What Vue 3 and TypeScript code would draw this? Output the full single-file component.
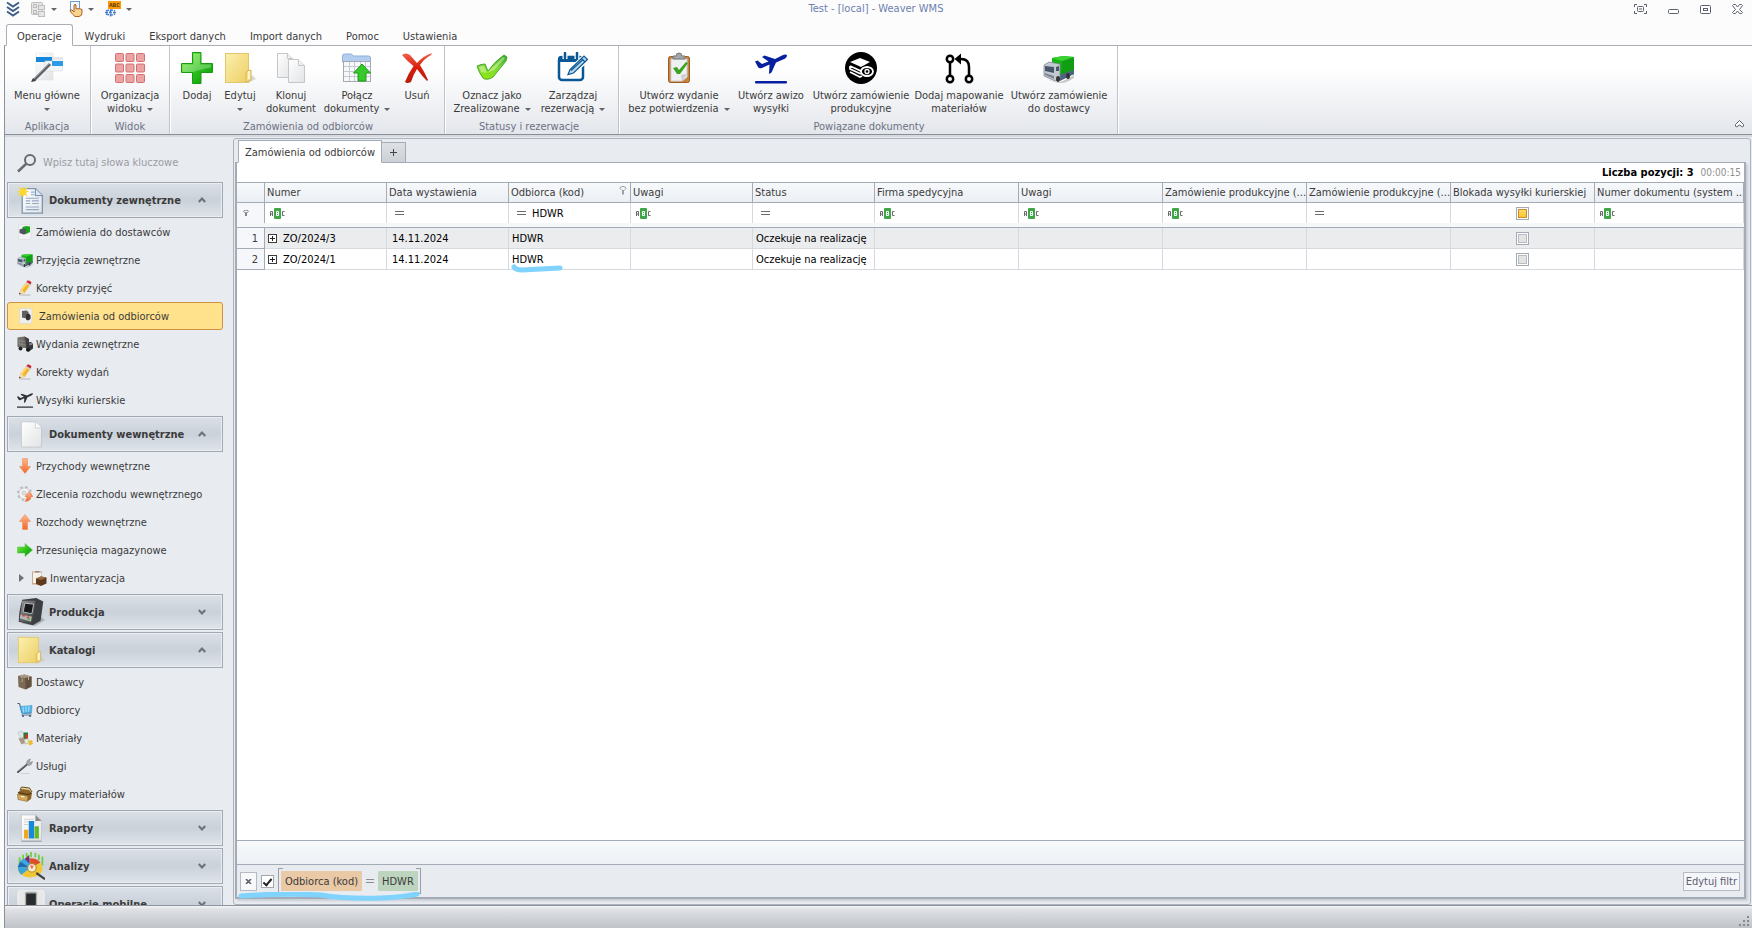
<script setup lang="ts">
import { ref } from 'vue'

interface RibbonButton { icon: string; lines: string[]; drop?: boolean; size: string }
interface RibbonGroup { title: string; key: string; buttons: RibbonButton[] }
interface NavItem { icon: string; label: string; nested?: boolean }
interface NavGroup { title: string; icon: string; open: boolean; items: NavItem[] }
interface Column { title: string; filter: 'abc' | 'eq' | 'check'; value?: string; funnel?: boolean; wide?: boolean }
interface Order { number: string; date: string; customer: string; status: string }

const tabs = ['Operacje', 'Wydruki', 'Eksport danych', 'Import danych', 'Pomoc', 'Ustawienia']
const activeTab = ref('Operacje')

const ribbon: RibbonGroup[] = [
  { title: 'Aplikacja', key: 'g-app', buttons: [{ icon: 'menu', lines: ['Menu główne', ''], drop: true, size: 'w82' }] },
  { title: 'Widok', key: 'g-view', buttons: [{ icon: 'layout', lines: ['Organizacja', 'widoku'], drop: true, size: 'w74' }] },
  {
    title: 'Zamówienia od odbiorców', key: 'g-orders', buttons: [
      { icon: 'plus', lines: ['Dodaj'], size: 'w42' },
      { icon: 'folder', lines: ['Edytuj', ''], drop: true, size: 'w44' },
      { icon: 'clone', lines: ['Klonuj', 'dokument'], size: 'w58' },
      { icon: 'merge', lines: ['Połącz', 'dokumenty'], drop: true, size: 'w74' },
      { icon: 'remove', lines: ['Usuń'], size: 'w46' },
    ],
  },
  {
    title: 'Statusy i rezerwacje', key: 'g-status', buttons: [
      { icon: 'check', lines: ['Oznacz jako', 'Zrealizowane'], drop: true, size: 'w88' },
      { icon: 'calendar', lines: ['Zarządzaj', 'rezerwacją'], drop: true, size: 'w74' },
    ],
  },
  {
    title: 'Powiązane dokumenty', key: 'g-linked', buttons: [
      { icon: 'clipboard', lines: ['Utwórz wydanie', 'bez potwierdzenia'], drop: true, size: 'w110' },
      { icon: 'plane', lines: ['Utwórz awizo', 'wysyłki'], size: 'w74' },
      { icon: 'production', lines: ['Utwórz zamówienie', 'produkcyjne'], size: 'w106' },
      { icon: 'branch', lines: ['Dodaj mapowanie', 'materiałów'], size: 'w90' },
      { icon: 'truck', lines: ['Utwórz zamówienie', 'do dostawcy'], size: 'w110' },
    ],
  },
]

const groups = ref<NavGroup[]>([
  {
    title: 'Dokumenty zewnętrzne', icon: 'docnew', open: true, items: [
      { icon: 'pagetruck', label: 'Zamówienia do dostawców' },
      { icon: 'truck', label: 'Przyjęcia zewnętrzne' },
      { icon: 'pencil', label: 'Korekty przyjęć' },
      { icon: 'pagetruckdark', label: 'Zamówienia od odbiorców' },
      { icon: 'truckdark', label: 'Wydania zewnętrzne' },
      { icon: 'pencil', label: 'Korekty wydań' },
      { icon: 'planedark', label: 'Wysyłki kurierskie' },
    ],
  },
  {
    title: 'Dokumenty wewnętrzne', icon: 'doc', open: true, items: [
      { icon: 'down', label: 'Przychody wewnętrzne' },
      { icon: 'gear', label: 'Zlecenia rozchodu wewnętrznego' },
      { icon: 'up', label: 'Rozchody wewnętrzne' },
      { icon: 'right', label: 'Przesunięcia magazynowe' },
      { icon: 'inventory', label: 'Inwentaryzacja', nested: true },
    ],
  },
  { title: 'Produkcja', icon: 'machine', open: false, items: [] },
  {
    title: 'Katalogi', icon: 'folder', open: true, items: [
      { icon: 'box', label: 'Dostawcy' },
      { icon: 'cart', label: 'Odbiorcy' },
      { icon: 'materials', label: 'Materiały' },
      { icon: 'wrench', label: 'Usługi' },
      { icon: 'bag', label: 'Grupy materiałów' },
    ],
  },
  { title: 'Raporty', icon: 'report', open: false, items: [] },
  { title: 'Analizy', icon: 'analysis', open: false, items: [] },
  { title: 'Operacje mobilne', icon: 'mobile', open: false, items: [] },
])
const activeItem = ref('Zamówienia od odbiorców')

const columns: Column[] = [
  { title: 'Numer', filter: 'abc' },
  { title: 'Data wystawienia', filter: 'eq' },
  { title: 'Odbiorca (kod)', filter: 'eq', value: 'HDWR', funnel: true },
  { title: 'Uwagi', filter: 'abc' },
  { title: 'Status', filter: 'eq' },
  { title: 'Firma spedycyjna', filter: 'abc', wide: true },
  { title: 'Uwagi', filter: 'abc', wide: true },
  { title: 'Zamówienie produkcyjne (...', filter: 'abc', wide: true },
  { title: 'Zamówienie produkcyjne (...', filter: 'eq', wide: true },
  { title: 'Blokada wysyłki kurierskiej', filter: 'check', wide: true },
  { title: 'Numer dokumentu (system ...', filter: 'abc' },
]
const orders: Order[] = [
  { number: 'ZO/2024/3', date: '14.11.2024', customer: 'HDWR', status: 'Oczekuje na realizację' },
  { number: 'ZO/2024/1', date: '14.11.2024', customer: 'HDWR', status: 'Oczekuje na realizację' },
]
const filterOn = ref(true)
</script>

<template>
  <div class="app">
    <svg class="sprite" aria-hidden="true">
      <defs>
        <linearGradient id="gGreen" x1="0" y1="0" x2="1" y2="1"><stop offset="0" stop-color="#8cf04c" /><stop offset=".5" stop-color="#2ec41c" /><stop offset="1" stop-color="#0c8f0c" /></linearGradient>
        <linearGradient id="gLime" x1="0" y1="0" x2="0" y2="1"><stop offset="0" stop-color="#2fa32a" /><stop offset=".5" stop-color="#7ed83a" /><stop offset="1" stop-color="#8fe80c" /></linearGradient>
        <linearGradient id="gYellow" x1="0" y1="0" x2="1" y2="1"><stop offset="0" stop-color="#fbf0ae" /><stop offset="1" stop-color="#edcf66" /></linearGradient>
        <linearGradient id="gPaper" x1="0" y1="0" x2="1" y2="1"><stop offset="0" stop-color="#fff" /><stop offset="1" stop-color="#e2e3e5" /></linearGradient>
        <linearGradient id="gOrange" x1="0" y1="0" x2="0" y2="1"><stop offset="0" stop-color="#ffb98a" /><stop offset="1" stop-color="#f2672a" /></linearGradient>
        <linearGradient id="gRed" x1="0" y1="0" x2="0" y2="1"><stop offset="0" stop-color="#f0604a" /><stop offset=".5" stop-color="#d81e0a" /><stop offset="1" stop-color="#b81c0c" /></linearGradient>
        <linearGradient id="gDark" x1="0" y1="0" x2="1" y2="1"><stop offset="0" stop-color="#9a9c9e" /><stop offset="1" stop-color="#2e3032" /></linearGradient>
      </defs>
      <symbol id="menu" viewBox="0 0 32 32">
        <rect x="5" y="1" width="17" height="27" fill="url(#gPaper)" stroke="#dcdee2" stroke-width=".5" /><rect x="5" y="5" width="16" height="5" fill="#1787dd" />
        <rect x="14" y="9" width="17.500" height="10" fill="#f4f5f7" stroke="#d0d3d8" stroke-width=".5" /><rect x="21" y="5" width="11" height="3" fill="#e5e8eb" /><rect x="21" y="9" width="11" height="5" fill="#2b9be8" />
        <path d="M3 28 19 12" stroke="#5c6066" stroke-width="3" /><path d="M2.500 27 18.500 11" stroke="#c5c8cc" /><path d="m0 30 2-4 3 3z" fill="#3c4044" />
      </symbol>
      <symbol id="layout" viewBox="0 0 32 32">
        <g fill="#eba3a3" stroke="#d46f70">
          <rect x="1.500" y="1.500" width="8" height="8" rx="1" /><rect x="12" y="1.500" width="8" height="8" rx="1" /><rect x="22.500" y="1.500" width="8" height="8" rx="1" />
          <rect x="1.500" y="12" width="8" height="8" rx="1" /><rect x="12" y="12" width="8" height="8" rx="1" /><rect x="22.500" y="12" width="8" height="8" rx="1" />
          <rect x="1.500" y="22.500" width="8" height="8" rx="1" /><rect x="12" y="22.500" width="8" height="8" rx="1" /><rect x="22.500" y="22.500" width="8" height="8" rx="1" />
        </g>
      </symbol>
      <symbol id="plus" viewBox="0 0 32 32"><path d="M11.500.500h8.500v11h11.500v9h-11.500v11h-8.500v-11H.500v-9h11z" fill="url(#gGreen)" stroke="#1a9a14" /><path d="M12.500 2h6.500v10.500h11v3Q16 18 12.500 20h-11v-7.500h11z" fill="#fff" opacity=".28" /></symbol>
      <symbol id="folder" viewBox="0 0 32 32"><path d="m24 31 8-4-4-4z" fill="#c9c9c4" opacity=".7" /><rect x="1.500" y="1.500" width="23" height="29" fill="url(#gYellow)" stroke="#e2c76a" /><path d="M22 30v-9q1-3 5-3v10z" fill="#f4de8c" stroke="#d9b653" /><path d="M25 19v8" stroke="#fff6cf" stroke-width="2" /></symbol>
      <symbol id="clone" viewBox="0 0 32 32"><g fill="url(#gPaper)" stroke="#c4c6c9"><path d="M2.500 1.500h10l5 5v19h-15z" /><path d="M12.500 1.500v5h5" /><path d="M13.500 7.500h10l6 6v17h-16z" /><path d="M23.500 7.500v6h6" /></g></symbol>
      <symbol id="merge" viewBox="0 0 32 32">
        <path d="M1.500 10V4q0-2 2-2h7l2 2h15q2 0 2 2v4z" fill="#b3cdee" stroke="#8db0dc" /><rect x="2.500" y="9.500" width="27" height="20" fill="#f7f8fa" stroke="#a3a8b2" />
        <path d="M3 14.500h26M3 19.500h26M3 24.500h26M8.500 10v19M13.500 10v19M19.500 10v19M24.500 10v19" stroke="#c6cad1" /><path d="m21 12 8.500 9h-4.500v8h-8v-8h-4.500z" fill="#37c92b" stroke="#1d9c15" />
      </symbol>
      <symbol id="remove" viewBox="0 0 32 32"><path d="M1 3q4-3 8 0l7 8q6-7 15-10l-1 2q-7 4-11 10 5 8 8 15l-1 1q-5-5-10-12-4 6-6 13-4 2-6 0 3-8 8.500-16Q6 9 1 3z" fill="url(#gRed)" /></symbol>
      <symbol id="check" viewBox="0 0 32 32"><path d="M1 14q4-2 8-2l3 7Q19 9 28 3l3 2-1 4L17 25q-6 4-10 1-4-5-6-12z" fill="url(#gLime)" stroke="#4aa82c" /><path d="M3 15q3-2 5-1l3 7L27 5l2 1-11 12q-7 4-13 2z" fill="#efffc8" opacity=".45" /></symbol>
      <symbol id="calendar" viewBox="0 0 32 32">
        <rect x="2" y="5" width="24" height="23" rx="3" fill="#fff" stroke="#0a5795" stroke-width="2.500" /><path d="M4 4h20q3 0 3 3v3H1V7q0-3 3-3z" fill="#0a5795" />
        <path d="M8 1v6M20 1v6" stroke="#fff" stroke-width="5" /><path d="M8 1v5M20 1v5" stroke="#0a5795" stroke-width="2.500" stroke-linecap="round" />
        <path d="m11 23 2-6L27 4l4 4-14 13z" fill="#fff" stroke="#fff" stroke-width="3" /><path d="m11 22.500 2-5L27 4l3.500 3.500L16.500 21zM24.500 6.500 28 10M14 18.500 26 7.500" fill="#b8d5ea" stroke="#0a5795" stroke-width="1.200" />
      </symbol>
      <symbol id="clipboard" viewBox="0 0 32 32">
        <rect x="5.500" y="4.500" width="21" height="26" rx="2" fill="#c8843e" stroke="#9a5a22" /><path d="M8 7h16v18l-5 4H8z" fill="#eff0f2" stroke="#cfd1d4" /><path d="m24 22-6 1 1 6z" fill="#c9ccd0" />
        <path d="M10 7V4h3q0-3 3-3t3 3h3v3z" fill="#a2a5a9" stroke="#77797d" /><path d="m10 16 4-1 2 3 7-8 2 1-8 11h-3z" fill="#3aa321" />
      </symbol>
      <symbol id="airplane" viewBox="0 0 32 32"><path d="M0 9.500 2.500 8.500l4.500 3.500 6.500-2.500L7 5l2.500-1.500L20 7l7-3.500Q30 2 32 3q0 3-4 4.500l-7 3-4.500 10-2.500 1.500.500-9.500L7 16q-3 1-4-1z" /></symbol>
      <symbol id="plane" viewBox="0 0 32 32"><use href="#airplane" fill="#0620a0" /><rect y="29" width="32" height="2.500" rx="1" fill="#0620a0" /></symbol>
      <symbol id="planedark" viewBox="0 0 32 32"><use href="#airplane" fill="#303236" /><rect y="29" width="32" height="2.500" fill="#303236" /></symbol>
      <symbol id="production" viewBox="0 0 32 32">
        <circle cx="16" cy="16" r="16" /><path d="m5 10 10-4 10 4-9 5z" fill="#fff" /><path d="m5 14 11 5 4-2M5 14v3l11 5M5 20l10 5 2-1" fill="none" stroke="#fff" stroke-width="1.700" />
        <ellipse cx="22" cy="19.500" rx="6" ry="4.500" fill="#000" stroke="#fff" stroke-width="1.800" /><circle cx="22" cy="19.500" r="2" fill="none" stroke="#fff" stroke-width="1.300" />
      </symbol>
      <symbol id="branch" viewBox="0 0 32 32"><g fill="none" stroke="#000" stroke-width="2.500"><circle cx="7" cy="7" r="3.200" /><circle cx="7" cy="27" r="3.200" /><circle cx="26" cy="27" r="3.200" /><path d="M7 10.500v13M26 23.500V15q0-8-8-8" /></g><path d="m11.500 7 6.500-5.500v11z" /></symbol>
      <symbol id="truck" viewBox="0 0 32 32">
        <path d="M4 27q10 5 16 2l11-6v3q-8 5-12 5-9 0-15-4z" fill="#555" opacity=".3" /><path d="m9 6 11-2 11 1v17l-14 5-8-5z" fill="#17b417" /><path d="m19 9 12-4v17l-13 5z" fill="#129e14" /><path d="m9 6 11-2 11 1-12 4z" fill="#3ad233" />
        <path d="m16 23 15-5v4l-14 7z" fill="#4d6480" /><path d="m1 13 5-3 11 2v15l-5 2-11-5z" fill="#c3c9d1" stroke="#767d88" stroke-width=".7" /><path d="m2 14 9 1v6l-9-2zM13 15l3-1v5h-3z" fill="#48566a" />
        <path d="m2 21 9 3v3l-9-4z" fill="#7d8794" /><ellipse cx="15" cy="27" rx="2" ry="3" fill="#333" /><ellipse cx="25" cy="24" rx="2" ry="3" fill="#333" />
      </symbol>
      <symbol id="truckdark" viewBox="0 0 32 32"><path d="m1 3 14-2 9 5v19L1 22z" fill="#6b6966" /><path d="m4 3 2 19m4-21v22M1 9l22 3M1 15l22 4" stroke="#a3a09b" /><path d="m15 1 9 5v19l-5-2z" fill="#44423f" /><path d="m19 13 9-1 4 4v9l-8 6-6-2z" fill="#34363a" /><path d="m24 15 5-1 2 3-6 2z" fill="#8b9096" /><circle cx="7" cy="25" r="4" fill="#252525" /><circle cx="22" cy="28" r="3.500" fill="#151515" /></symbol>
      <symbol id="pagetruck" viewBox="0 0 32 32"><path d="M3 1h25v27l-4 3H3z" fill="#f1f2f3" stroke="#d4d6d9" /><path d="m11 6 7-2 8 1v11l-8 4-7-2z" fill="#1ba51d" /><path d="m5 11 6-2 7 1v10l-5 1-8-3z" fill="#4e565e" /></symbol>
      <symbol id="pagetruckdark" viewBox="0 0 32 32"><path d="M3 1h25v27l-4 3H3z" fill="#efeeec" stroke="#d2d1cf" /><path d="m8 6 9-1 4 3v14L8 19z" fill="#62605d" /><path d="m16 13 6-2 3 4v7l-5 3-4-2z" fill="#303236" /></symbol>
      <symbol id="pencil" viewBox="0 0 32 32"><path d="M5 30h22" stroke="#c4c8ce" stroke-width="3" /><path d="m4 29 3-10L19 4l8 5-12 17z" fill="#f5b427" /><path d="m7 19 12-15 3 2L10 22z" fill="#ffd878" /><path d="m4 29 3-10 8 6z" fill="#f4dcb8" /><path d="m4 29 1-4 3 2z" fill="#333" /><path d="m18 5 3-4q5-1 8 4l-3 6z" fill="#c9282f" /><path d="m17 6 2-2 8 5-2 3z" fill="#d2d6da" /></symbol>
      <symbol id="docnew" viewBox="0 0 32 32"><path d="M6 3h15l8 8v20H6z" fill="url(#gPaper)" stroke="#7e95b0" stroke-width="1.500" /><path d="M21 3v8h8" fill="#dce6f1" stroke="#5e7da4" /><path d="M16 7h4M16 10h4M10 14h15M10 17h5M10 20h5M17 17h8M17 20h8M10 24h15M10 27h15" stroke="#91aaca" stroke-width="1.200" /><path d="m7 0 1 3 4-2-2 4 4 1-4 2 2 4-4-2-1 3-2-3-4 2 2-4-3-2 4-1-2-4 4 2z" fill="#f9d834" /></symbol>
      <symbol id="doc" viewBox="0 0 32 32"><path d="M5 2h16l7 7v22H5z" fill="url(#gPaper)" stroke="#c5c7ca" /><path d="M21 2v7h7" fill="#fff" stroke="#cbccd0" /></symbol>
      <symbol id="down" viewBox="0 0 32 32"><path d="M11 1h10v16h6L16 31 5 17h6z" fill="url(#gOrange)" stroke="#e9824f" /></symbol>
      <symbol id="up" viewBox="0 0 32 32"><path d="M11 31h10V15h6L16 1 5 15h6z" fill="url(#gOrange)" stroke="#e9824f" /></symbol>
      <symbol id="right" viewBox="0 0 32 32"><path d="M1 10h15V3l15 13-15 13v-7H1z" fill="url(#gGreen)" stroke="#54b84a" /></symbol>
      <symbol id="gear" viewBox="0 0 32 32"><circle cx="15" cy="15" r="13" fill="none" stroke="#b9bbbe" stroke-width="4" stroke-dasharray="5 5.200" /><circle cx="15" cy="15" r="11" fill="#f4f4f4" stroke="#bcbec1" stroke-width="1.500" /><circle cx="14" cy="14" r="4" fill="#e0e2e6" stroke="#a9abae" /><path d="M16 31q5-4 4-10h-4l8-10 8 10h-4q0 9-12 10z" fill="url(#gOrange)" stroke="#dd6a38" /></symbol>
      <symbol id="inventory" viewBox="0 0 32 32"><rect x="2" y="3" width="20" height="26" fill="#cbaa85" /><path d="M4 5h17v21H4z" fill="#f4f2ee" /><path d="M8 5V2h9v3z" fill="#8b8c8f" /><path d="m10 17 10-4 11 2v12l-11 5-10-4z" fill="#5d3a1e" /><path d="m10 17 10-4 11 2-11 5z" fill="#9a6d40" /></symbol>
      <symbol id="machine" viewBox="0 0 32 32"><path d="m5 29 16 3 11-7-4-3z" fill="#888" opacity=".5" /><path d="M6 2 22 0l8 4-3 22-9 5-16-4q0-12 4-25z" fill="#3d4043" /><path d="M6 3h15l-3 24-2 3-13-4z" fill="url(#gDark)" /><path d="m9 6 10 1-2 11-10-2z" fill="#171a1c" stroke="#c5c8c9" /><path d="m4 19 13 2-1 6-13-4z" fill="#b4b7b9" /><path d="m6 20 3 .5M11 22h3" stroke="#df4838" stroke-width="2" /><path d="m12 24 3 .5" stroke="#50bd38" stroke-width="2" /></symbol>
      <symbol id="box" viewBox="0 0 32 32"><path d="m2 4 13-3 14 4v20l-12 6L3 26z" fill="#7b6a56" /><path d="m2 4 13-3 14 4-12 3z" fill="#a99a86" /><path d="m17 8 12-3v20l-12 6z" fill="#62513f" /><path d="m8 5 2 3v8M23 4v8" stroke="#c0b39f" stroke-width="2" /></symbol>
      <symbol id="cart" viewBox="0 0 32 32"><path d="M1 3h4l5 19h19" fill="none" stroke="#33587c" stroke-width="2" /><path d="m6 9 24-2-1 14-19 2z" fill="#55b6ea" stroke="#2486c4" /><path d="m12 9 1 12m5-13v12m6-13-1 12" stroke="#c8ecfc" stroke-width="1.500" /><path d="M9 26h20" stroke="#51799a" stroke-width="2" /><circle cx="12" cy="28" r="2" fill="#34536e" /><circle cx="26" cy="28" r="2" fill="#34536e" /></symbol>
      <symbol id="materials" viewBox="0 0 32 32"><path d="m2 5 7-3 5 4v8l-7 3z" fill="#dfe4e6" stroke="#aab1b5" /><path d="M13 5h9v13h-9z" fill="#267a38" /><path d="M17 9h5v10h-5z" fill="#d4351e" /><path d="m3 17 10-2 7 9-11 5z" fill="#a99c85" /><path d="m14 19 8-2 3 8-9 3z" fill="#e9e6de" stroke="#999" /><path d="m23 22 7-2 2 8-8 3z" fill="#eabf23" /></symbol>
      <symbol id="wrench" viewBox="0 0 32 32"><path d="M8 31h17" stroke="#cfd3d8" stroke-width="2" /><path d="M2 28 21 12" stroke="#4e5153" stroke-width="4" stroke-linecap="round" /><path d="m2 26 18-15" stroke="#a9acae" stroke-width="1.500" /><path d="M19 11q0-8 8-9l-2 4 2 3 4-2q-1 8-8 8z" fill="#a5a9ad" stroke="#7b7f83" /></symbol>
      <symbol id="bag" viewBox="0 0 32 32"><path d="M6 8 9 2l16 2 5 8" fill="#e6d2a2" stroke="#6a4b1e" stroke-width="2" /><path d="m3 12 6-6 15 2 6 6-2 12-6 4-20-5z" fill="#8b6429" /><path d="m1 16 21 4-1 11-19-4z" fill="#d2a858" stroke="#795522" /><path d="m2 13 20 4 7-3" stroke="#49320f" fill="none" stroke-width="2" /><path d="m8 21 7 1" stroke="#fff" stroke-width="2" /></symbol>
      <symbol id="report" viewBox="0 0 32 32"><path d="M5 31h23" stroke="#a8adb3" stroke-width="2" /><path d="M5 1h17l6 6v23H5z" fill="url(#gPaper)" stroke="#c5c7c9" /><path d="M21 1v7h7z" fill="#868a8f" /><path d="M8 6h11M8 9h14M8 12h12" stroke="#c9cbce" /><rect x="8" y="18" width="5" height="10" fill="#f2a620" /><rect x="13.500" y="8" width="6" height="20" fill="#1689dc" /><rect x="20" y="14" width="5" height="14" fill="#62b828" /></symbol>
      <symbol id="analysis" viewBox="0 0 32 32"><path d="M3 14V6m4 4V3m4 4V1m5 5V0m5 6V1m4 8V3m4 12V5" stroke="#6cce3d" stroke-width="2" /><ellipse cx="15" cy="19" rx="14" ry="10" fill="#f2c533" /><path d="M15 18 3 11q5-5 12-4z" fill="#3aa5e8" /><path d="M15 18 1 17q1-4 3-6z" fill="#1c6cb8" /><path d="M15 18V7q8 0 12 5z" fill="#e14c28" /><path d="m15 18-10 8q-4-4-4-9z" fill="#35a4df" /><path d="m9 8 5-5v10z" fill="#8a2560" /><circle cx="17" cy="18" r="5" fill="#fff" opacity=".75" stroke="#aa8a3d" stroke-width="1.500" /><path d="m15 15 2 5 2-4z" fill="#e4674e" /><path d="m22 24 10 7" stroke="#444" stroke-width="2.500" /></symbol>
      <symbol id="mobile" viewBox="0 0 32 32"><rect x="1" y="0" width="30" height="31" rx="4" fill="#e7e7e7" stroke="#f4f4f4" /><rect x="9" y="2" width="14" height="28" rx="2" fill="#a9abad" /><rect x="10.500" y="4" width="11" height="17" fill="#292c2f" /></symbol>
      <symbol id="abc" viewBox="0 0 16 11">
        <rect x="5" width="7" height="11" rx="1" fill="#3fa648" /><path d="M1.500 8V3.500h2V8M1.500 6h2M15.500 3.500h-2v4h2" fill="none" stroke="#6a6a6a" /><path d="M7.500 3.500h2v4h-2zM7.500 5.500h2" fill="none" stroke="#fff" />
      </symbol>
      <symbol id="funnel" viewBox="0 0 8 9"><path d="M1 2.500q0-2 3-2t3 2L5 4.500H3z" fill="none" stroke="currentColor" /><path d="M4 4v4.500" stroke="currentColor" stroke-width="2" /></symbol>
    </svg>

    <header class="titlebar">
      <div class="quick">
        <button class="qbtn q1" aria-label="Menu"><svg width="14" height="16" viewBox="0 0 14 16"><path d="m1 1.500 6 4 6-4M1 6l6 4 6-4M1 10.500l6 4 6-4" fill="none" stroke="#3e5f8a" stroke-width="2" /></svg></button>
        <button class="qbtn q2" aria-label="Siatka"><svg width="15" height="15" viewBox="0 0 15 15"><g fill="#e6e6e6" stroke="#bdbdbd"><rect x=".5" y=".5" width="11" height="12" rx="1" /><rect x="2.500" y="2.500" width="3" height="3" /><rect x="7.500" y="3.500" width="6" height="4" /><rect x="2.500" y="8.500" width="3" height="3" /><rect x="7.500" y="9.500" width="6" height="5" /></g></svg><i class="caret" /></button>
        <button class="qbtn q3" aria-label="Tryb dotykowy"><svg width="14" height="16" viewBox="0 0 14 16"><rect x="1.500" y=".5" width="9" height="10" fill="#f5f8fc" stroke="#6d9ad1" /><path d="M5 11V4q1-1.500 2 0v4q1-1 2 0 1-1 2 0 2-.5 2 1v3q0 3-3 3.500H6Q4 14 1 10q0-1.500 2-1z" fill="#f8d38d" stroke="#a8652a" /></svg><i class="caret" /></button>
        <button class="qbtn" aria-label="Język"><svg width="16" height="16" viewBox="0 0 16 16"><rect x="3" width="13" height="8" fill="#fb9b07" /><text x="4" y="6" class="tiny">ABC</text><path d="M1 10q5-2 9 0M1 13q5 2 9 0M5.500 8.500v7M0 11.500h11" stroke="#4b80ca" stroke-width="1.500" fill="none" stroke-dasharray="3 1" /></svg><i class="caret" /></button>
      </div>
      <h1 class="title">Test - [local] - Weaver WMS</h1>
      <div class="wincontrols">
        <button aria-label="Pełny ekran"><svg width="13" height="11" viewBox="0 0 13 11"><path d="M.5 3V.5H3M10 .5h2.500V3M12.500 7v2.500H10M3 9.500H.5V7" fill="none" stroke="#5a616d" /><rect x="3.500" y="2.500" width="6" height="5" rx="1" fill="none" stroke="#5a616d" /><path d="M5 5h3" stroke="#5a616d" /></svg></button>
        <button aria-label="Minimalizuj"><svg width="11" height="11" viewBox="0 0 11 11"><rect x=".5" y="5.500" width="10" height="4" rx="1" fill="#fff" stroke="#5a616d" /></svg></button>
        <button aria-label="Maksymalizuj"><svg width="11" height="11" viewBox="0 0 11 11"><rect x=".5" y="1.500" width="10" height="8" rx="1" fill="#fff" stroke="#5a616d" /><rect x="3.500" y="4.500" width="4" height="2" fill="none" stroke="#5a616d" /></svg></button>
        <button aria-label="Zamknij"><svg width="11" height="11" viewBox="0 0 11 11"><path d="m.5 1.500 1-1h2l2 2.500 2-2.500h2l1 1L7.500 5.500l3 3-1 1h-2l-2-2.500-2 2.500h-2l-1-1 3-3z" fill="#fff" stroke="#5a616d" /></svg></button>
      </div>
    </header>

    <nav class="tabs">
      <button v-for="t in tabs" :key="t" class="tab" :class="{ on: t === activeTab }" @click="activeTab = t">{{ t }}</button>
    </nav>

    <div class="shell">
      <section class="ribbon">
        <div v-for="g in ribbon" :key="g.key" class="group" :class="g.key">
          <div class="buttons">
            <button v-for="b in g.buttons" :key="b.icon" class="rbtn" :class="b.size">
              <svg width="32" height="32"><use :href="'#' + b.icon" /></svg>
              <span v-for="(l, i) in b.lines" :key="i" class="line">{{ l }}<i v-if="b.drop && i === b.lines.length - 1" class="caret" :class="{ gap: l }" /></span>
            </button>
          </div>
          <div class="gtitle">{{ g.title }}</div>
        </div>
        <button class="collapse" aria-label="Zwiń wstążkę"><svg width="9" height="8" viewBox="0 0 9 8"><path d="m4.500.5 4 4v1.500l-1 1-3-2-3 2-1-1V4.500z" fill="#fff" stroke="#565b64" /></svg></button>
      </section>

      <div class="work">
        <aside class="side">
          <label class="search">
            <svg width="20" height="20" viewBox="0 0 20 20"><circle cx="13" cy="7" r="5" fill="none" stroke="#6a6b6d" stroke-width="2" /><path d="m9.500 10.500-8.500 8" stroke="#6a6b6d" stroke-width="2.500" /></svg>
            <input type="text" placeholder="Wpisz tutaj słowa kluczowe" aria-label="Szukaj">
          </label>
          <div v-for="g in groups" :key="g.title" class="navgroup">
            <button class="navhead" :aria-expanded="g.open" @click="g.open = !g.open">
              <svg width="28" height="28"><use :href="'#' + g.icon" /></svg>
              <span>{{ g.title }}</span>
              <svg class="chev" :class="{ flip: !g.open }" width="8" height="6" viewBox="0 0 8 6"><path d="m.8 5 3.200-3.500L7.200 5" fill="none" stroke="#6b7079" stroke-width="2" /></svg>
            </button>
            <template v-if="g.open">
              <a v-for="it in g.items" :key="it.label" href="#" class="navitem" :class="{ on: it.label === activeItem, nested: it.nested }" @click.prevent="activeItem = it.label">
                <svg v-if="it.nested" width="5" height="8"><path d="m0 0 5 4-5 4z" fill="#6e727a" /></svg>
                <svg width="16" height="16"><use :href="'#' + it.icon" /></svg>
                <span>{{ it.label }}</span>
              </a>
            </template>
          </div>
        </aside>

        <main class="panel">
          <div class="doctabs">
            <button class="doctab">Zamówienia od odbiorców</button>
            <button class="addtab" aria-label="Nowa karta"><svg width="7" height="7"><path d="M3.500 0v7M0 3.500h7" stroke="#444" /></svg></button>
          </div>
          <div class="sheet">
            <div class="info"><strong>Liczba pozycji: 3</strong><span>00:00:15</span></div>
            <table class="grid">
              <colgroup>
                <col class="cind">
                <col v-for="(c, i) in columns" :key="i" :class="i === columns.length - 1 ? 'crest' : c.wide ? 'cwide' : 'cnorm'">
              </colgroup>
              <thead>
                <tr class="heads">
                  <th />
                  <th v-for="(c, i) in columns" :key="i">{{ c.title }}<svg v-if="c.funnel" class="funnel" width="8" height="9"><use href="#funnel" /></svg></th>
                </tr>
                <tr class="filters">
                  <td class="ind"><svg width="6" height="8" viewBox="0 0 8 9"><use href="#funnel" width="8" height="9" /></svg></td>
                  <td v-for="(c, i) in columns" :key="i" :class="{ mid: c.filter === 'check' }">
                    <input v-if="c.filter === 'check'" type="checkbox" class="box partial" :aria-label="c.title">
                    <label v-else class="fcell">
                      <svg v-if="c.filter === 'abc'" width="16" height="11"><use href="#abc" /></svg>
                      <svg v-else class="eq" width="9" height="4"><path d="M0 .5h9M0 3.500h9" stroke="#6c6c6c" /></svg>
                      <input type="text" :value="c.value" :aria-label="c.title">
                    </label>
                  </td>
                </tr>
                <tr class="split"><td class="ind" /><td :colspan="columns.length" /></tr>
              </thead>
              <tbody>
                <tr v-for="(o, i) in orders" :key="o.number" :class="{ first: i === 0 }">
                  <td class="ind num">{{ i + 1 }}</td>
                  <td><button class="expand" aria-label="Rozwiń"><svg width="9" height="9"><rect x=".5" y=".5" width="8" height="8" fill="#fff" stroke="#3c3c3c" /><path d="M4.500 2v5M2 4.500h5" stroke="#222" /></svg></button>{{ o.number }}</td>
                  <td class="date">{{ o.date }}</td>
                  <td class="cust">{{ o.customer }}<svg v-if="i === 1" class="mark" width="54" height="10"><path d="M4 4q2 3 8 3 18-1 38-2" /></svg></td>
                  <td /><td>{{ o.status }}</td><td /><td /><td /><td />
                  <td class="mid"><input type="checkbox" class="box" aria-label="Blokada wysyłki kurierskiej"></td>
                  <td />
                </tr>
              </tbody>
            </table>
            <div class="void" />
            <div class="summary" />
            <div class="filterbar">
              <button class="clear" aria-label="Wyczyść filtr"><svg width="7" height="5" viewBox="0 0 7 5"><path d="m1 0 5 5M6 0 1 5" stroke="#565b64" stroke-width="1.500" /></svg></button>
              <input v-model="filterOn" type="checkbox" class="enable" aria-label="Filtr aktywny">
              <div class="expr">
                <button class="chip field">Odbiorca (kod)</button>
                <svg width="8" height="4"><path d="M0 .5h8M0 3.500h8" stroke="#8b8e94" /></svg>
                <button class="chip value">HDWR</button>
              </div>
              <button class="edit">Edytuj filtr</button>
              <svg class="mark" width="184" height="12"><path d="M4 4q40-3 80-1 24 4 60 3 22-1 36-4" /></svg>
            </div>
          </div>
        </main>
      </div>
      <footer class="statusbar"><svg width="11" height="11"><path d="M8 0h2v2H8zM4 4h2v2H4zM8 4h2v2H8zM0 8h2v2H0zM4 8h2v2H4zM8 8h2v2H8z" fill="#85898f" /></svg></footer>
    </div>
  </div>
</template>

<style>
html, body { margin: 0; background: #fcfcfd; }
</style>

<style scoped>
.app { display: flex; flex-direction: column; height: 100vh; overflow: hidden; font: 11px/13px Tahoma, "DejaVu Sans Condensed", "Noto Sans", sans-serif; color: #3b3b3b; background: #fcfcfd; }
.app * { box-sizing: border-box; }
button, input { font: inherit; color: inherit; margin: 0; padding: 0; border: 0; background: none; outline: 0; }
svg { display: block; flex: none; }
.sprite { position: absolute; width: 0; height: 0; }
.caret { display: inline-block; border: 3px solid transparent; border-top-color: #5f636b; border-bottom: 0; vertical-align: middle; }
.caret.gap { margin-left: 5px; }

.titlebar { display: grid; grid-template-columns: 1fr auto 1fr; height: 24px; flex: none; align-items: start; }
.quick { display: flex; padding-left: 6px; }
.qbtn { display: flex; align-items: center; gap: 5px; height: 18px; }
.q1 { margin-right: 11px; }
.q2 { margin-right: 12px; }
.q3 { margin-right: 11px; }
.tiny { font: bold 6px "Liberation Mono", monospace; fill: #5b3c08; }
.title { margin: 0; font-size: 11px; font-weight: normal; line-height: 18px; color: #6c7fae; }
.wincontrols { display: flex; justify-content: flex-end; gap: 21px; padding: 4px 9px 0 0; }

.tabs { display: flex; height: 22px; flex: none; padding-left: 6px; position: relative; z-index: 1; margin-bottom: -1px; }
.tab { padding: 2px 11px 0; height: 22px; border: 1px solid transparent; white-space: nowrap; }
.tab.on { padding: 2px 10px 0; background: #fff; border-color: #abaeb5; border-bottom-color: #fff; border-radius: 3px 3px 0 0; }

.shell { display: flex; flex-direction: column; flex: 1; min-height: 0; margin-left: 4px; border-left: 1px solid #8c9098; border-top: 1px solid #abaeb5; }
.ribbon { display: flex; flex: none; position: relative; height: 89px; background: linear-gradient(#fff 25%, #e3e6eb); border-bottom: 1px solid #8a8e95; }
.group { display: flex; flex-direction: column; flex: none; border-right: 1px solid #bfc3ca; box-shadow: 1px 0 #fff; }
.g-app { padding: 0 2px 0 1px; }
.g-view { padding: 0 2px; }
.g-orders { padding: 0 4px 0 6px; }
.g-status { padding: 0 8px 0 3px; }
.g-linked { padding: 0 3px 0 5px; }
.buttons { display: flex; height: 73px; padding-top: 6px; }
.rbtn { display: flex; flex-direction: column; align-items: center; white-space: nowrap; }
.rbtn svg { margin-bottom: 5px; }
.line { height: 13px; line-height: 13px; display: block; }
.w42 { width: 42px; } .w44 { width: 44px; } .w46 { width: 46px; } .w58 { width: 58px; } .w74 { width: 74px; } .w82 { width: 82px; }
.w88 { width: 88px; } .w90 { width: 90px; } .w106 { width: 106px; } .w110 { width: 110px; }
.gtitle { text-align: center; line-height: 15px; color: #6c7184; }
.collapse { position: absolute; right: 8px; bottom: 6px; }

.work { display: flex; flex: 1; min-height: 0; background: #e8ebf0; border-top: 2px solid #d6dae0; }
.side { width: 228px; flex: none; overflow: hidden; padding: 8px 10px 0 2px; }
.search { display: flex; align-items: center; gap: 6px; height: 37px; padding: 0 0 2px 10px; }
.search input { flex: 1; min-width: 0; }
.search input::placeholder { color: #9a9da3; opacity: 1; }
.navgroup { margin-bottom: 2px; }
.navhead { display: flex; align-items: center; width: 100%; height: 36px; padding: 0 16px 0 9px; border: 1px solid #a2a9b3; box-shadow: inset 0 0 0 1px #e9ecf1; background: linear-gradient(#dbe0e7, #cad1d9 50%, #dfe4ea); font-weight: bold; text-align: left; }
.navhead span { flex: 1; margin-left: 4px; white-space: nowrap; }
.flip { transform: rotate(180deg); }
.navitem { display: flex; align-items: center; gap: 3px; height: 28px; padding-left: 10px; color: inherit; text-decoration: none; white-space: nowrap; }
.navitem.on { gap: 5px; background: #ffe28b; border: 1px solid #cf9244; border-radius: 3px; }
.navitem.nested { padding-left: 12px; gap: 2px; }
.navitem.nested svg + svg { margin: 0 1px 0 5px; }

.panel { display: flex; flex-direction: column; flex: 1; min-width: 0; margin: 1px 1px 0 0; padding: 1px 4px 5px 1px; border: 1px solid #adb3bc; border-radius: 3px; }
.doctabs { display: flex; align-items: flex-end; height: 23px; padding-left: 3px; margin-bottom: -1px; position: relative; z-index: 1; }
.doctab { width: 144px; height: 23px; padding-top: 1px; background: #fff; border: 1px solid #a3abb7; border-bottom-color: #fff; }
.addtab { display: grid; place-items: center; width: 24px; height: 21px; border: 1px solid #a3abb7; border-left: 0; background: linear-gradient(#dde1e6, #ccd1d7); }
.sheet { display: flex; flex-direction: column; flex: 1; min-height: 0; background: #fff; border: 2px solid #a3abb7; border-top-width: 1px; box-shadow: 2px 2px 2px #c9ced5; }
.info { display: flex; justify-content: flex-end; gap: 7px; height: 19px; line-height: 19px; padding-right: 3px; color: #000; flex: none; }
.info span { color: #8f8f8f; font-size: 10px; }
.grid { width: 100%; table-layout: fixed; border-collapse: separate; border-spacing: 0; color: #000; flex: none; }
.cind { width: 28px; } .cnorm { width: 122px; } .cwide { width: 144px; }
.grid th, .grid td { padding: 0 3px; text-align: left; font-weight: normal; overflow: hidden; white-space: nowrap; border-right: 1px solid #d6d9de; }
.grid .heads th { height: 21px; padding: 0 0 0 2px; position: relative; color: #3b3b3b; background: linear-gradient(#f7f9fb, #ebeff4); border: solid #a3abb7; border-width: 1px 1px 1px 0; }
.funnel { position: absolute; right: 3px; top: 3px; color: #9ba0a8; }
.filters td { height: 20px; }
.grid .ind { background: #f5f7fa; border-right-color: #a3abb7; }
.filters .ind svg { margin-left: 3px; color: #5a5e66; }
.fcell { display: flex; align-items: center; gap: 6px; }
.fcell svg { margin-left: 1px; }
.fcell .eq { margin-left: 5px; }
.fcell input { width: 100%; min-width: 0; height: 18px; }
.grid .split td { height: 5px; background: #f5f7f9; border-right: 0; border-bottom: 1px solid #a3abb7; }
tbody td { height: 21px; border-bottom: 1px solid #d6d9de; }
tbody .first td { background: #ebecee; }
.grid tbody td.ind { border-bottom-color: #a3abb7; text-align: right; padding-right: 6px; color: #3b3b3b; }
.expand { float: left; margin: 2px 6px 0 0; }
.grid td.date { padding-left: 5px; }
.grid td.cust { position: relative; overflow: visible; }
.mark { position: absolute; z-index: 2; pointer-events: none; }
.mark path { fill: none; stroke: #7fd3fc; stroke-width: 5; stroke-linecap: round; }
.cust .mark { left: 1px; top: 14px; }
.grid .mid { text-align: center; }
.box { appearance: none; display: block; width: 13px; height: 13px; margin: 0 auto; border: 1px solid #a3abb7; background: #e3e3e4; box-shadow: inset 0 0 0 1px #fff, inset 0 0 0 2px #b9bcc1; }
.partial { background: linear-gradient(#fbe07e, #f8c21b); box-shadow: inset 0 0 0 1px #fff, inset 0 0 0 2px #d78a28; }
.void { flex: 1; }
.summary { flex: none; height: 24px; border-top: 1px solid #a3abb7; background: linear-gradient(#f7f9fb, #edf1f5); }
.filterbar { display: flex; align-items: center; flex: none; position: relative; height: 33px; padding: 0 4px 0 3px; border-top: 1px solid #a3abb7; background: #e8ebf0; }
.clear { display: grid; place-items: center; width: 17px; height: 19px; border: 1px solid #b6bbc3; background: #f7f8fa; }
.enable { appearance: none; width: 13px; height: 13px; margin: 0 4px; border: 1px solid #a3a7ae; background: #fff; display: grid; place-items: center; }
.enable:checked::before { content: ""; width: 3px; height: 7px; border: solid #222; border-width: 0 2px 2px 0; transform: rotate(40deg); }
.expr { display: flex; align-items: center; gap: 4px; height: 26px; padding: 0 3px; position: relative; }
.expr::before, .expr::after { content: ""; position: absolute; top: 0; bottom: 0; width: 4px; border: 1px solid #9a9ea6; }
.expr::before { left: 0; border-right: 0; }
.expr::after { right: 0; border-left: 0; }
.chip { height: 20px; padding: 0 4px; border-radius: 1px; }
.field { background: #e9c9a6; }
.value { background: #bdd4bf; }
.edit { margin-left: auto; height: 19px; padding: 0 2px; border: 1px solid #b6bbc3; background: #f4f6f9; color: #5c6070; }
.filterbar .mark { left: 0; top: 27px; }
.statusbar { display: flex; justify-content: flex-end; align-items: flex-end; flex: none; height: 23px; padding: 0 2px 1px 0; border-top: 1px solid #8f939b; background: linear-gradient(#f3f4f6, #dfe1e5 15%, #bfc3c8); }
</style>
